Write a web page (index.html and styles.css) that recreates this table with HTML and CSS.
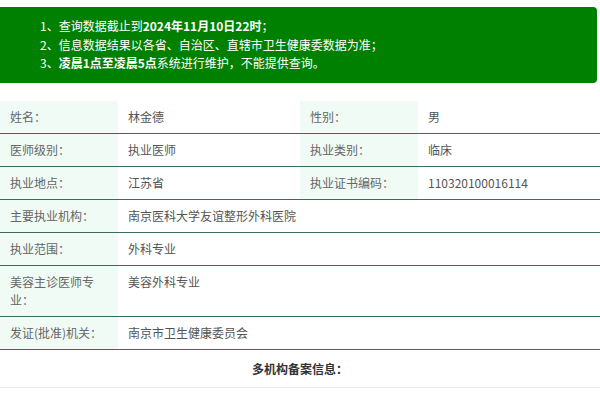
FILE: index.html
```html
<!DOCTYPE html>
<html lang="zh-CN">
<head>
<meta charset="utf-8">
<link rel="stylesheet" href="styles.css">
</head>
<body>
<div class="notice">
  <p>1、查询数据截止到<b>2024年11月10日22时</b>；</p>
  <p>2、信息数据结果以各省、自治区、直辖市卫生健康委数据为准；</p>
  <p>3、<b>凌晨1点至凌晨5点</b>系统进行维护，不能提供查询。</p>
</div>
<table class="info">
  <colgroup>
    <col class="c-label"><col class="c-value"><col class="c-label"><col class="c-value">
  </colgroup>
  <tr class="first">
    <td class="label">姓名：</td><td class="value">林金德</td>
    <td class="label">性别：</td><td class="value">男</td>
  </tr>
  <tr>
    <td class="label">医师级别：</td><td class="value">执业医师</td>
    <td class="label">执业类别：</td><td class="value">临床</td>
  </tr>
  <tr>
    <td class="label">执业地点：</td><td class="value">江苏省</td>
    <td class="label">执业证书编码：</td><td class="value">110320100016114</td>
  </tr>
  <tr>
    <td class="label">主要执业机构：</td><td class="value" colspan="3">南京医科大学友谊整形外科医院</td>
  </tr>
  <tr>
    <td class="label">执业范围：</td><td class="value" colspan="3">外科专业</td>
  </tr>
  <tr>
    <td class="label">美容主诊医师专业：</td><td class="value" colspan="3">美容外科专业</td>
  </tr>
  <tr>
    <td class="label">发证(批准)机关：</td><td class="value" colspan="3">南京市卫生健康委员会</td>
  </tr>
  <tr class="head">
    <th colspan="4">多机构备案信息：</th>
  </tr>
</table>
</body>
</html>
```
FILE: styles.css
```css
html, body {
  margin: 0;
  padding: 0;
  background: #fff;
  font-family: "Noto Sans CJK SC", "Noto Sans", sans-serif;
}
.notice {
  margin: 7px 3px 0 0;
  padding: 10px 0 10px 40px;
  background: #008000;
  color: #fff;
  font-size: 12px;
  line-height: 18.5px;
  border-radius: 0 4px 4px 0;
}
.notice p {
  margin: 0;
}
.notice b {
  font-weight: 700;
}
.info {
  margin-top: 18px;
  width: 600px;
  border-collapse: collapse;
  table-layout: fixed;
  font-size: 12px;
  line-height: 18px;
}
.c-label { width: 118px; }
.c-value { width: 182px; }
.info td {
  padding: 7px 10px 7px 10px;
  vertical-align: top;
  border-bottom: 1px solid #3a6c58;
}
.info td.label {
  background: #effbf4;
  color: #666;
}
.info td.value {
  color: #555;
}
.info tr.head th {
  padding: 10px 0 9px;
  font-weight: 700;
  color: #333;
  text-align: center;
  border-bottom: 1px solid #eaeaea;
}
```
